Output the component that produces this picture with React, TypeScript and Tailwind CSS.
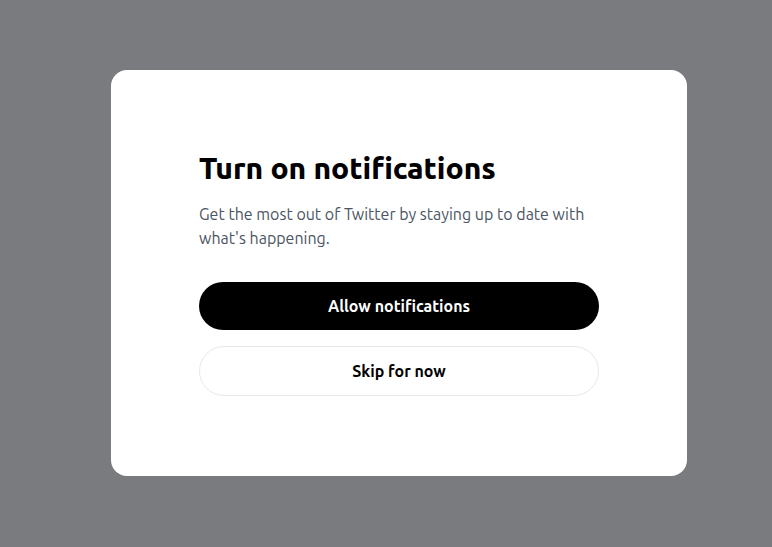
export default function App() {
  return (
    <div className="w-[772px] h-[547px] bg-[#7a7b7e] flex items-start justify-start pl-[111px] pt-[70px]" style={{ fontFamily: '"Ubuntu", Lato, "Noto Sans", sans-serif' }}>
      <div className="w-[576px] h-[406px] bg-white rounded-2xl px-[88px] pt-[80px]">
        <h1 className="text-[30px] leading-[36px] font-extrabold text-black tracking-[-0.03px]">Turn on notifications</h1>
        <p className="mt-[16px] text-[16px] leading-[24px] text-[#4b5563] w-[400px]">
          Get the most out of Twitter by staying up to date with what's happening.
        </p>
        <button className="mt-[32px] w-[400px] h-[48px] rounded-full bg-black text-white text-[16px] font-bold">Allow notifications</button>
        <button className="mt-[16px] w-[400px] h-[50px] rounded-full bg-white border border-[#e5e7eb] text-black text-[16px] font-bold">Skip for now</button>
      </div>
    </div>
  );
}
